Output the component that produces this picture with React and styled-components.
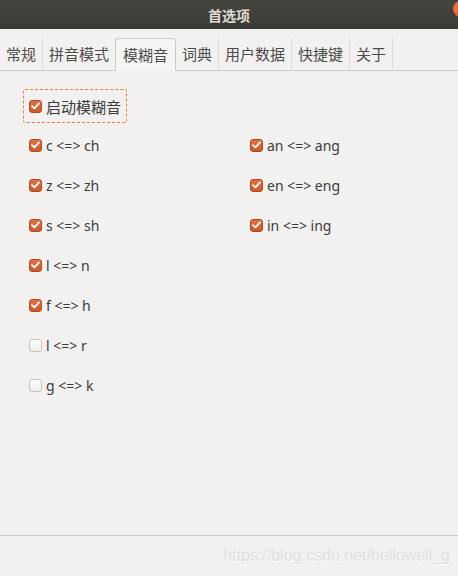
import React from "react";
import styled, { createGlobalStyle } from "styled-components";

const GlobalStyle = createGlobalStyle`
  html, body {
    margin: 0;
    padding: 0;
    background: #f2f1f0;
  }
  body {
    font-family: "Noto Sans", "Noto Sans CJK SC", sans-serif;
    color: #3c3c3c;
  }
`;

const Window = styled.div`
  width: 458px;
  height: 576px;
  display: flex;
  flex-direction: column;
  background: #f2f1f0;
  overflow: hidden;
`;

const TitleBar = styled.div`
  position: relative;
  height: 29px;
  flex: none;
  background: linear-gradient(#45443f, #3b3a36);
  display: flex;
  align-items: center;
  justify-content: center;
  color: #dfdbd2;
  font-family: "Noto Sans CJK SC", sans-serif;
  font-size: 14px;
  font-weight: bold;
`;

const CloseDot = styled.span`
  position: absolute;
  right: -11px;
  top: 1px;
  width: 16px;
  height: 16px;
  border-radius: 50%;
  background: radial-gradient(circle at 40% 40%, #f47b4a, #e0501e);
`;

const TabBar = styled.div`
  flex: none;
  height: 41px;
  display: flex;
  align-items: flex-end;
  padding-left: 0;
  border-bottom: 1px solid #cdc9c4;
`;

const Tab = styled.div`
  height: ${(p) => (p.$active ? "33px" : "31px")};
  padding: 0 ${(p) => (p.$active ? "7px" : "6px")};
  display: flex;
  align-items: center;
  font-family: "Noto Sans CJK SC", sans-serif;
  font-size: 15px;
  color: #4c4c4c;
  box-sizing: border-box;
  margin-bottom: ${(p) => (p.$active ? "-1px" : "1px")};
  ${(p) =>
    p.$active
      ? `
    background: #f6f5f4;
    border: 1px solid #cdc9c4;
    border-bottom-color: #f6f5f4;
    border-radius: 4px 4px 0 0;
    margin-left: -1px;
  `
      : `
    border-right: 1px solid #dedad5;
  `}
`;

const Content = styled.div`
  flex: 1;
  padding: 18px 0 0 23px;
`;

const MasterRow = styled.div`
  display: inline-flex;
  align-items: center;
  gap: 4px;
  height: 32px;
  padding: 0 5px;
  border: 1px dashed #e97a4a;
  border-radius: 2px;
  margin-bottom: 2px;
  font-family: "Noto Sans CJK SC", sans-serif;
  font-size: 15px;
  color: #3c3c3c;
`;

const Grid = styled.div`
  display: grid;
  grid-template-columns: 221px 1fr;
  grid-auto-rows: 40px;
  padding-left: 6px;
`;

const Item = styled.label`
  display: flex;
  align-items: center;
  gap: 4px;
  font-size: 14px;
  color: #3c3c3c;
  grid-column: ${(p) => p.$col};
  grid-row: ${(p) => p.$row};
`;

const Box = styled.span`
  width: 13px;
  height: 13px;
  box-sizing: border-box;
  border-radius: 3px;
  display: inline-flex;
  align-items: center;
  justify-content: center;
  flex: none;
  ${(p) =>
    p.$checked
      ? `
    background: linear-gradient(#e4703f, #cc5a2d);
    border: 1px solid #b04a22;
  `
      : `
    background: linear-gradient(#fbfbfa, #f0efee);
    border: 1px solid #c8c4bf;
  `}
`;

const Footer = styled.div`
  flex: none;
  height: 40px;
  border-top: 1px solid #cdc9c4;
  display: flex;
  align-items: center;
  justify-content: flex-end;
  padding-right: 8px;
`;

const Watermark = styled.span`
  font-family: "Liberation Sans", Arial, sans-serif;
  font-size: 16px;
  color: #e0dedb;
  text-shadow: 0 1px 0 #ffffff;
`;

function Check({ checked }) {
  return (
    <Box $checked={checked}>
      {checked && (
        <svg width="9" height="8" viewBox="0 0 9 8">
          <path d="M1 4.2 L3.4 6.4 L8 1.4" fill="none" stroke="#fff" strokeWidth="1.8" strokeLinecap="round" strokeLinejoin="round" />
        </svg>
      )}
    </Box>
  );
}

const tabs = ["常规", "拼音模式", "模糊音", "词典", "用户数据", "快捷键", "关于"];

const pairs = [
  { text: "c <=> ch", checked: true, col: 1, row: 1 },
  { text: "z <=> zh", checked: true, col: 1, row: 2 },
  { text: "s <=> sh", checked: true, col: 1, row: 3 },
  { text: "l <=> n", checked: true, col: 1, row: 4 },
  { text: "f <=> h", checked: true, col: 1, row: 5 },
  { text: "l <=> r", checked: false, col: 1, row: 6 },
  { text: "g <=> k", checked: false, col: 1, row: 7 },
  { text: "an <=> ang", checked: true, col: 2, row: 1 },
  { text: "en <=> eng", checked: true, col: 2, row: 2 },
  { text: "in <=> ing", checked: true, col: 2, row: 3 },
];

export default function App() {
  return (
    <Window>
      <GlobalStyle />
      <TitleBar>
        首选项
        <CloseDot />
      </TitleBar>
      <TabBar>
        {tabs.map((t) => (
          <Tab key={t} $active={t === "模糊音"}>
            {t}
          </Tab>
        ))}
      </TabBar>
      <Content>
        <MasterRow>
          <Check checked />
          启动模糊音
        </MasterRow>
        <Grid>
          {pairs.map((p) => (
            <Item key={p.text + p.col} $col={p.col} $row={p.row}>
              <Check checked={p.checked} />
              {p.text}
            </Item>
          ))}
        </Grid>
      </Content>
      <Footer>
        <Watermark>https://blog.csdn.net/hellowell_g</Watermark>
      </Footer>
    </Window>
  );
}
